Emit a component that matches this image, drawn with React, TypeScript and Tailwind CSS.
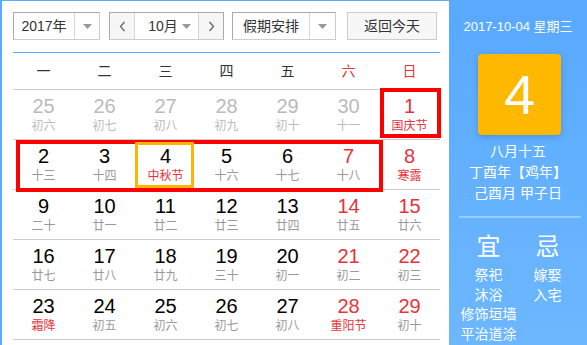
import React from "react";

type Cell = { n: number; l: string; nc?: string; lc?: string };

const G = "text-[#bbbbbb]";
const R = "text-[#e8333a]";
const K = "text-[#000000]";
const L = "text-[#999999]";

const rows: Cell[][] = [
  [
    { n: 25, l: "初六", nc: G, lc: G },
    { n: 26, l: "初七", nc: G, lc: G },
    { n: 27, l: "初八", nc: G, lc: G },
    { n: 28, l: "初九", nc: G, lc: G },
    { n: 29, l: "初十", nc: G, lc: G },
    { n: 30, l: "十一", nc: G, lc: G },
    { n: 1, l: "国庆节", nc: R, lc: R },
  ],
  [
    { n: 2, l: "十三" },
    { n: 3, l: "十四" },
    { n: 4, l: "中秋节", lc: R },
    { n: 5, l: "十六" },
    { n: 6, l: "十七" },
    { n: 7, l: "十八", nc: R },
    { n: 8, l: "寒露", nc: R, lc: R },
  ],
  [
    { n: 9, l: "二十" },
    { n: 10, l: "廿一" },
    { n: 11, l: "廿二" },
    { n: 12, l: "廿三" },
    { n: 13, l: "廿四" },
    { n: 14, l: "廿五", nc: R },
    { n: 15, l: "廿六", nc: R },
  ],
  [
    { n: 16, l: "廿七" },
    { n: 17, l: "廿八" },
    { n: 18, l: "廿九" },
    { n: 19, l: "三十" },
    { n: 20, l: "初一" },
    { n: 21, l: "初二", nc: R },
    { n: 22, l: "初三", nc: R },
  ],
  [
    { n: 23, l: "霜降", lc: R },
    { n: 24, l: "初五" },
    { n: 25, l: "初六" },
    { n: 26, l: "初七" },
    { n: 27, l: "初八" },
    { n: 28, l: "重阳节", nc: R, lc: R },
    { n: 29, l: "初十", nc: R },
  ],
];

const weekdays = ["一", "二", "三", "四", "五", "六", "日"];

function Caret() {
  return (
    <svg width="9" height="5" viewBox="0 0 9 5">
      <path d="M0 0 L9 0 L4.5 5 Z" fill="#999999" />
    </svg>
  );
}

function Chevron({ dir }: { dir: "l" | "r" }) {
  return (
    <svg width="7" height="11" viewBox="0 0 7 11">
      <path
        d={dir === "l" ? "M5.5 1 L1.5 5.5 L5.5 10" : "M1.5 1 L5.5 5.5 L1.5 10"}
        fill="none"
        stroke="#666666"
        strokeWidth="1.3"
      />
    </svg>
  );
}

export default function App() {
  return (
    <div
      className="relative flex w-[587px] h-[345px] overflow-hidden bg-white"
      style={{ fontFamily: '"Liberation Sans", Arial, "Noto Sans CJK SC", sans-serif' }}
    >
      {/* Left calendar */}
      <div className="w-[449px] border-l-2 border-t border-[#5aabff] pl-[11px] pr-[9px] pt-[11px]">
        {/* Controls */}
        <div className="flex h-[28px] text-[14px] text-[#333333]">
          <div className="flex w-[87px] border border-[#aaaaaa] border-b-[#cccccc] border-r-[#cccccc]">
            <div className="flex w-[60px] items-center justify-center">2017年</div>
            <div className="flex flex-1 items-center justify-center border-l border-[#d5d5d5]">
              <Caret />
            </div>
          </div>
          <div className="ml-[9px] flex w-[115px] border border-[#aaaaaa] border-b-[#cccccc]">
            <div className="flex w-[24px] items-center justify-center bg-[#f6f6f6]">
              <Chevron dir="l" />
            </div>
            <div className="flex w-[65px] items-center justify-center gap-[4px] border-x border-[#d5d5d5] pl-[6px]">
              <span>10月</span>
              <Caret />
            </div>
            <div className="flex flex-1 items-center justify-center bg-[#f6f6f6]">
              <Chevron dir="r" />
            </div>
          </div>
          <div className="ml-[8px] flex w-[104px] border border-[#cccccc] border-l-[#aaaaaa] border-t-[#aaaaaa]">
            <div className="flex w-[76px] items-center justify-center">假期安排</div>
            <div className="flex flex-1 items-center justify-center border-l border-[#d5d5d5]">
              <Caret />
            </div>
          </div>
          <div className="ml-[11px] flex w-[90px] items-center justify-center border border-[#cccccc] bg-[#f7f7f7]">
            返回今天
          </div>
        </div>

        <div className="mt-[12px] h-px bg-[#5aabff]" />

        {/* Weekday header */}
        <div className="grid grid-cols-7 h-[37px] items-center border-b border-[#cccccc] text-[14px] text-[#333333]">
          {weekdays.map((w, i) => (
            <div key={w} className={`text-center ${i >= 5 ? "text-[#e8333a]" : ""}`}>
              {w}
            </div>
          ))}
        </div>

        {/* Rows */}
        <div>
          {rows.map((row, ri) => (
            <div key={ri} className="grid grid-cols-7 h-[50px] border-b border-[#cccccc]">
              {row.map((c, ci) => (
                <div key={ci} className="flex flex-col items-center pt-[4px]">
                  <div className={`text-[20px] leading-[24px] ${c.nc ?? K}`}>{c.n}</div>
                  <div className={`text-[12px] leading-[16px] ${c.lc ?? L}`}>{c.l}</div>
                </div>
              ))}
            </div>
          ))}
        </div>
      </div>

      {/* Right panel */}
      <div className="flex-1 flex flex-col items-center bg-linear-to-b from-[#58a9ff] to-[#6db7ff] text-white">
        <div className="pt-[19px] text-[13px] leading-[16px]">2017-10-04 星期三</div>
        <div className="mt-[19px] ml-[3px] flex h-[81px] w-[83px] items-center justify-center rounded-[4px] bg-[#ffb800] shadow-[0_2px_6px_rgba(40,90,170,0.35)]">
          <span className="text-[56px] leading-none">4</span>
        </div>
        <div className="mt-[6px] text-center text-[14px] leading-[21px]">
          <div>八月十五</div>
          <div>丁酉年【鸡年】</div>
          <div>己酉月 甲子日</div>
        </div>
        <div className="mt-[12px] ml-[3px] h-[2px] w-[122px] bg-white/35" />
        <div className="mt-[15px] grid w-full grid-cols-2 px-[10px]">
          <div className="flex flex-col items-center">
            <div className="text-[24px] leading-[28px]">宜</div>
            <div className="mt-[5px] text-center text-[14px] leading-[19.5px]">
              <div>祭祀</div>
              <div>沐浴</div>
              <div>修饰垣墙</div>
              <div>平治道涂</div>
            </div>
          </div>
          <div className="flex flex-col items-center">
            <div className="text-[24px] leading-[28px]">忌</div>
            <div className="mt-[5px] text-center text-[14px] leading-[19.5px]">
              <div>嫁娶</div>
              <div>入宅</div>
            </div>
          </div>
        </div>
      </div>

      {/* Annotation overlays */}
      <div className="pointer-events-none absolute left-[380px] top-[88px] h-[50px] w-[61px] border-4 border-[#ff0000]" />
      <div className="pointer-events-none absolute left-[16px] top-[140px] h-[52px] w-[367px] border-4 border-[#ff0000]" />
      <div className="pointer-events-none absolute left-[135px] top-[142px] h-[46px] w-[59px] border-[3px] border-[#ffb400]" />
    </div>
  );
}
